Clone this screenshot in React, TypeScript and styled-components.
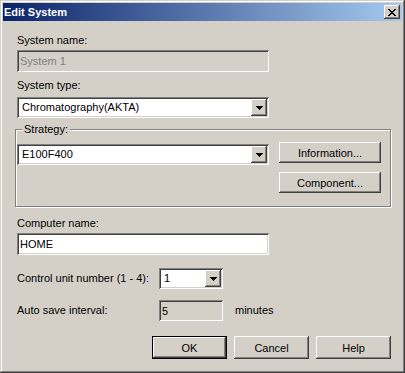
import React from "react";
import styled, { createGlobalStyle } from "styled-components";

const FACE = "#d4d0c8";

const sunken = `
  box-shadow: inset 1px 1px #808080, inset -1px -1px #ffffff,
    inset 2px 2px #404040, inset -2px -2px ${FACE};
`;

const raised = `
  box-shadow: inset -1px -1px #404040, inset 1px 1px #ffffff,
    inset -2px -2px #808080, inset 2px 2px ${FACE};
`;

const GlobalStyle = createGlobalStyle`
  html, body {
    margin: 0;
    padding: 0;
    background: ${FACE};
  }
  body {
    font-family: "Liberation Sans", Arial, sans-serif;
    font-size: 11px;
    color: #000;
  }
`;

const Window = styled.div`
  width: 405px;
  height: 373px;
  box-sizing: border-box;
  padding: 3px;
  background: ${FACE};
  display: flex;
  flex-direction: column;
  box-shadow: inset -1px -1px #404040, inset 1px 1px ${FACE},
    inset -2px -2px #808080, inset 2px 2px #ffffff;
`;

const TitleBar = styled.div`
  height: 18px;
  flex: none;
  display: flex;
  align-items: center;
  justify-content: space-between;
  padding: 0 2px 0 1px;
  background: linear-gradient(to right, #0a246a, #a6caf0);
`;

const Title = styled.span`
  color: #fff;
  font-weight: bold;
  font-size: 11px;
  line-height: 13px;
  white-space: nowrap;
`;

const CloseButton = styled.button`
  width: 16px;
  height: 14px;
  padding: 0;
  border: 0;
  background: ${FACE};
  display: flex;
  align-items: center;
  justify-content: center;
  ${raised}
`;

const Body = styled.div`
  flex: 1;
  display: flex;
  flex-direction: column;
  align-items: flex-start;
  padding: 13px 11px 0 14px;
`;

const Label = styled.label<{ $mt?: number; $w?: number }>`
  display: block;
  flex: none;
  width: ${({ $w }) => ($w ? `${$w}px` : "auto")};
  line-height: 13px;
  margin-top: ${({ $mt }) => $mt ?? 0}px;
  white-space: nowrap;
`;

const Edit = styled.input<{ $w: number; $h: number; $mt?: number; $face?: boolean; $dim?: boolean }>`
  width: ${({ $w }) => $w}px;
  height: ${({ $h }) => $h}px;
  flex: none;
  box-sizing: border-box;
  margin: ${({ $mt }) => $mt ?? 0}px 0 0 0;
  padding: 0 2px 0 3px;
  border: 0;
  outline: none;
  font-family: "Liberation Sans", Arial, sans-serif;
  font-size: 11px;
  background: ${({ $face }) => ($face ? FACE : "#fff")};
  color: ${({ $dim }) => ($dim ? "#808080" : "#000")};
  ${sunken}
`;

const Combo = styled.div<{ $w: number; $mt?: number }>`
  width: ${({ $w }) => $w}px;
  height: 21px;
  flex: none;
  box-sizing: border-box;
  margin-top: ${({ $mt }) => $mt ?? 0}px;
  padding: 2px;
  display: flex;
  align-items: center;
  background: #fff;
  ${sunken}
`;

const ComboText = styled.span`
  flex: 1;
  padding-left: 3px;
  line-height: 13px;
  white-space: nowrap;
  overflow: hidden;
`;

const DropButton = styled.span`
  width: 16px;
  height: 17px;
  flex: none;
  display: flex;
  align-items: center;
  justify-content: center;
  background: ${FACE};
  ${raised}
`;

const Group = styled.div`
  position: relative;
  align-self: stretch;
  margin: 11px 0 0 -2px;
  border: 1px solid #808080;
  box-shadow: inset 1px 1px #fff, 1px 1px #fff;
  display: flex;
  align-items: flex-start;
  gap: 10px;
  padding: 12px 0 13px 1px;
`;

const Legend = styled.span`
  position: absolute;
  top: -7px;
  left: 6px;
  padding: 0 2px;
  line-height: 13px;
  background: ${FACE};
`;

const ButtonColumn = styled.div`
  display: flex;
  flex-direction: column;
  gap: 9px;
`;

const PushButton = styled.button<{ $w: number; $h: number; $default?: boolean }>`
  width: ${({ $w }) => $w}px;
  height: ${({ $h }) => $h}px;
  flex: none;
  box-sizing: border-box;
  padding: 0;
  border: ${({ $default }) => ($default ? "1px solid #000" : "0")};
  background: ${FACE};
  color: #000;
  font-family: "Liberation Sans", Arial, sans-serif;
  font-size: 11px;
  ${raised}
`;

const Row = styled.div<{ $mt: number }>`
  display: flex;
  align-items: center;
  gap: 12px;
  margin-top: ${({ $mt }) => $mt}px;
`;

const Footer = styled.div`
  align-self: stretch;
  display: flex;
  justify-content: flex-end;
  gap: 7px;
  margin-top: 15px;
`;

const CloseGlyph = () => (
  <svg width="8" height="7" viewBox="0 0 8 7" shapeRendering="crispEdges">
    <path
      fill="#000"
      d="M0 0h2v1H0zM6 0h2v1H6zM1 1h2v1H1zM5 1h2v1H5zM2 2h4v1H2zM3 3h2v1H3zM2 4h4v1H2zM1 5h2v1H1zM5 5h2v1H5zM0 6h2v1H0zM6 6h2v1H6z"
    />
  </svg>
);

const Arrow = () => (
  <svg width="7" height="4" viewBox="0 0 7 4" shapeRendering="crispEdges">
    <path fill="#000" d="M0 0h7v1H0zM1 1h5v1H1zM2 2h3v1H2zM3 3h1v1H3z" />
  </svg>
);

const Dropdown = ({ value, w, mt }: { value: string; w: number; mt?: number }) => (
  <Combo $w={w} $mt={mt}>
    <ComboText>{value}</ComboText>
    <DropButton>
      <Arrow />
    </DropButton>
  </Combo>
);

export default function App() {
  return (
    <>
      <GlobalStyle />
      <Window>
        <TitleBar>
          <Title>Edit System</Title>
          <CloseButton aria-label="Close">
            <CloseGlyph />
          </CloseButton>
        </TitleBar>
        <Body>
          <Label>System name:</Label>
          <Edit $w={252} $h={22} $mt={3} $face $dim readOnly value="System 1" />

          <Label $mt={7}>System type:</Label>
          <Dropdown value="Chromatography(AKTA)" w={252} mt={5} />

          <Group>
            <Legend>Strategy:</Legend>
            <Dropdown value="E100F400" w={252} mt={2} />
            <ButtonColumn>
              <PushButton $w={102} $h={21}>Information...</PushButton>
              <PushButton $w={102} $h={21}>Component...</PushButton>
            </ButtonColumn>
          </Group>

          <Label $mt={10}>Computer name:</Label>
          <Edit $w={252} $h={22} $mt={3} readOnly value="HOME" />

          <Row $mt={13}>
            <Label $w={130}>Control unit number (1 - 4):</Label>
            <Dropdown value="1" w={64} />
          </Row>

          <Row $mt={11}>
            <Label $w={130}>Auto save interval:</Label>
            <Edit $w={64} $h={21} $face readOnly value="5" />
            <Label>minutes</Label>
          </Row>

          <Footer>
            <PushButton $w={75} $h={23} $default>OK</PushButton>
            <PushButton $w={75} $h={23}>Cancel</PushButton>
            <PushButton $w={75} $h={23}>Help</PushButton>
          </Footer>
        </Body>
      </Window>
    </>
  );
}
